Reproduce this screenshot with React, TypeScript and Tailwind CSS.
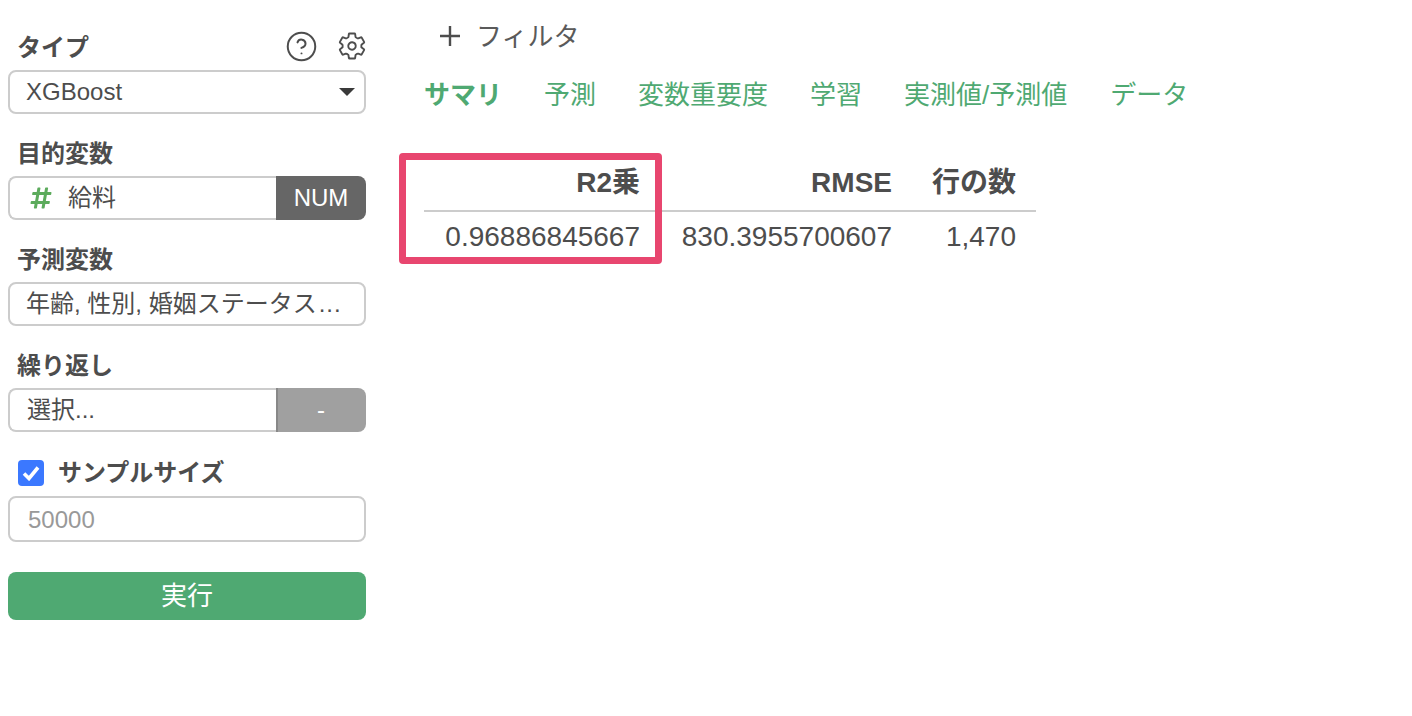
import { CircleHelp } from "lucide-react";
import { FaHashtag } from "react-icons/fa";
import { IoSettingsOutline } from "react-icons/io5";

const tabs = ["サマリ", "予測", "変数重要度", "学習", "実測値/予測値", "データ"];

function Label({ children }: { children: React.ReactNode }) {
	return <div className="flex h-[34px] mb-[5px] ml-[9px] items-center text-[24px] font-bold">{children}</div>;
}

export default function App() {
	return (
		<div className="flex min-h-[716px] bg-white text-[#4d4d4d] font-['Liberation_Sans','Noto_Sans_CJK_JP',sans-serif]">
			{/* --- Sidebar --- */}
			<aside className="w-[358px] ml-2 pt-[31px] shrink-0 text-[24px]">
				<div className="relative">
					<Label>タイプ</Label>
					<div className="absolute right-0 top-[-2px] flex items-center h-[34px] gap-[19px]">
						<CircleHelp size={33} strokeWidth={1.45} />
						<IoSettingsOutline size={30} className="mr-[-1px]" />
					</div>
				</div>
				<div className="flex h-11 items-center justify-between rounded-lg border-2 border-[#ccc] pl-4 pr-[9px]">
					<span>XGBoost</span>
					<svg width="16" height="8" viewBox="0 0 16 8">
						<path d="M0 0H16L8 8Z" fill="#3a3a3a" />
					</svg>
				</div>

				<div className="mt-[23px]">
					<Label>目的変数</Label>
					<div className="flex h-11">
						<div className="flex flex-1 items-center rounded-l-lg border-2 border-r-0 border-[#ccc] pl-[19px]">
							<FaHashtag size={24} className="text-[#5cab5c]" />
							<span className="ml-[15px]">給料</span>
						</div>
						<div className="flex w-[90px] items-center justify-center rounded-r-lg bg-[#666] text-white">NUM</div>
					</div>
				</div>

				<div className="mt-[23px]">
					<Label>予測変数</Label>
					<div className="flex h-11 items-center rounded-lg border-2 border-[#ccc] pl-4 whitespace-nowrap">
						<span>
							年齢, 性別, 婚姻ステータス<span className="ml-[2px] tracking-[1px]">...</span>
						</span>
					</div>
				</div>

				<div className="mt-[23px]">
					<Label>繰り返し</Label>
					<div className="flex h-11">
						<div className="flex flex-1 items-center rounded-l-lg border-2 border-r-0 border-[#ccc] pl-[17px]">選択...</div>
						<div className="flex w-[90px] items-center justify-center rounded-r-lg border-l-2 border-[#888] bg-[#a0a0a0] pr-[2px] text-white">-</div>
					</div>
				</div>

				<div className="mt-7 ml-[10px] flex h-[26px] items-center">
					<div className="flex h-[26px] w-[26px] items-center justify-center rounded bg-[#3b78ff]">
						<svg width="18" height="16" viewBox="0 0 18 16">
							<path d="M2 8.5L7 13.5L16 2.5" fill="none" stroke="white" strokeWidth="3.6" />
						</svg>
					</div>
					<span className="ml-[14px] font-bold">サンプルサイズ</span>
				</div>
				<input
					readOnly
					placeholder="50000"
					className="mt-[10px] block h-[46px] w-full rounded-lg border-2 border-[#ccc] pl-[18px] pt-[2px] placeholder:text-[#999]"
				/>
				<button className="mt-[30px] block h-12 w-full rounded-lg bg-[#4fa972] text-[26px] text-white">実行</button>
			</aside>

			{/* --- Main --- */}
			<main className="ml-[58px] pt-4">
				<div className="flex h-10 items-center pl-4 text-[26px] text-[#5a5a5a]">
					<svg width="20" height="20" viewBox="0 0 20 20">
						<path d="M10 0V20M0 10H20" stroke="#4d4d4d" strokeWidth="2.4" />
					</svg>
					<span className="ml-4 mt-[2px]">フィルタ</span>
				</div>
				<div className="mt-[19px] flex h-10 items-center text-[26px] text-[#4fa972]">
					{tabs.map((t, i) => (
						<span key={t} className={i === 0 ? "font-bold" : i === 5 ? "ml-[43px]" : "ml-[42px]"}>
							{t}
						</span>
					))}
				</div>
				<div className="relative mt-[38px] w-[612px]">
					<table className="w-[612px] table-fixed text-[28px]">
						<thead>
							<tr className="h-[58px] border-b-2 border-[#ccc] text-right">
								<th className="w-[236px] pr-5 pt-[2px]">R2乗</th>
								<th className="w-[252px] pr-5 pt-[2px]">RMSE</th>
								<th className="w-[124px] pr-5 pt-[2px]">行の数</th>
							</tr>
						</thead>
						<tbody>
							<tr className="h-[52px] text-right">
								<td className="pr-5 pb-[1px]">0.96886845667</td>
								<td className="pr-5 pb-[1px]">830.3955700607</td>
								<td className="pr-5 pb-[1px]">1,470</td>
							</tr>
						</tbody>
					</table>
					{/* highlight box */}
					<div className="absolute left-[-25px] top-0 h-[111px] w-[263px] rounded-[4px] border-[7px] border-[#e8466f]" />
				</div>
			</main>
		</div>
	);
}
